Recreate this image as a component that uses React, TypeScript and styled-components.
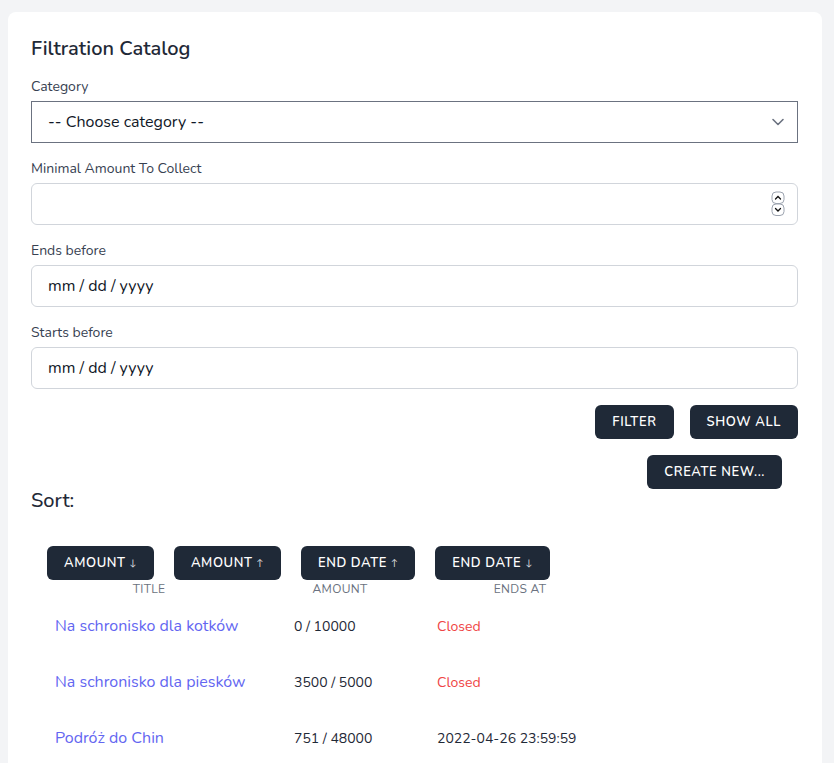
import React from "react";
import styled, { createGlobalStyle } from "styled-components";

const Global = createGlobalStyle`
  html, body { margin: 0; padding: 0; background: #f3f4f6; }
  body { font-family: "Nunito", Lato, "Noto Sans", sans-serif; color: #1f2937; }
  * { box-sizing: border-box; }
`;

const Page = styled.div`
  padding: 12px 12px 0 8px;
`;

const Card = styled.div`
  background: #fff;
  border-radius: 8px;
  padding: 23px 24px 24px 23px;
  min-height: 760px;
`;

const Title = styled.h2`
  margin: 0;
  font-size: 20px;
  line-height: 28px;
  font-weight: 600;
  color: #1f2937;
`;

const FieldGroup = styled.div<{ $top: number }>`
  margin-top: ${(p) => p.$top}px;
  display: flex;
  flex-direction: column;
  gap: 4px;
`;

const Label = styled.label`
  font-size: 14px;
  line-height: 20px;
  color: #374151;
`;

const Box = styled.div<{ $square?: boolean }>`
  height: 42px;
  display: flex;
  align-items: center;
  justify-content: space-between;
  padding: 0 12px 0 16px;
  border: 1px solid ${(p) => (p.$square ? "#6b7280" : "#d1d5db")};
  border-radius: ${(p) => (p.$square ? "0" : "6px")};
  background: #fff;
`;

const BoxText = styled.span`
  font-size: 16px;
  line-height: 24px;
  color: #111827;
`;

const BareInput = styled.input`
  flex: 1;
  border: none;
  outline: none;
  font: inherit;
  font-size: 16px;
  background: transparent;
  padding: 0;
  &::placeholder { color: #111827; }
`;

const ButtonRow = styled.div`
  margin-top: 16px;
  display: flex;
  justify-content: flex-end;
  gap: 16px;
`;

const Button = styled.button`
  height: 34px;
  padding: 0 17px;
  border: none;
  border-radius: 6px;
  background: #1f2937;
  color: #fff;
  font-family: inherit;
  font-size: 13px;
  font-weight: 600;
  letter-spacing: 0.6px;
  text-transform: uppercase;
  white-space: nowrap;
  cursor: pointer;
`;

const Arrow = styled.span`
  display: inline-block;
  font-size: 9px;
  font-weight: 400;
  margin-left: 4px;
  vertical-align: 1px;
  opacity: 0.85;
`;

const HeadRow = styled.div`
  margin-top: 16px;
  display: flex;
  justify-content: space-between;
  align-items: flex-start;
  padding-right: 16px;
`;

const SortTitle = styled.h2`
  margin: 32px 0 0;
  font-size: 20px;
  line-height: 28px;
  font-weight: 500;
  color: #1f2937;
`;

const SortSection = styled.div`
  padding-left: 16px;
  margin-top: 31px;
`;

const SortButtons = styled.div`
  display: flex;
  gap: 20px;
`;

const Grid = styled.div`
  display: grid;
  grid-template-columns: 204px 108px 182px;
  column-gap: 35px;
`;

const HeadCell = styled.div`
  height: 18px;
  font-size: 12px;
  line-height: 18px;
  text-align: center;
  text-transform: uppercase;
  color: #6b7280;
  letter-spacing: 0.3px;
`;

const Cell = styled.div<{ $color?: string; $size?: number }>`
  height: 56px;
  display: flex;
  align-items: center;
  padding-left: 8px;
  white-space: nowrap;
  font-size: ${(p) => p.$size ?? 14}px;
  color: ${(p) => p.$color ?? "#1f2937"};
`;

const Chevron = () => (
  <svg width="14" height="14" viewBox="0 0 14 14" fill="none">
    <path d="M2 4.5l5 5 5-5" stroke="#6b7280" strokeWidth="1.6" strokeLinecap="round" strokeLinejoin="round" />
  </svg>
);

const Spinner = () => (
  <svg width="14" height="26" viewBox="0 0 14 26" fill="none">
    <rect x="1" y="1" width="12" height="11.5" rx="4" stroke="#9ca3af" strokeWidth="1" />
    <rect x="1" y="13" width="12" height="11.5" rx="4" stroke="#9ca3af" strokeWidth="1" />
    <path d="M4.5 8l2.5-2.5L9.5 8" stroke="#111" strokeWidth="1.3" strokeLinecap="round" />
    <path d="M4.5 17.5L7 20l2.5-2.5" stroke="#111" strokeWidth="1.3" strokeLinecap="round" />
  </svg>
);

const rows = [
  { title: "Na schronisko dla kotków", amount: "0 / 10000", ends: "Closed", closed: true },
  { title: "Na schronisko dla piesków", amount: "3500 / 5000", ends: "Closed", closed: true },
  { title: "Podróż do Chin", amount: "751 / 48000", ends: "2022-04-26 23:59:59", closed: false },
];

const sorts = [
  { label: "Amount", arrow: "↓" },
  { label: "Amount", arrow: "↑" },
  { label: "End date", arrow: "↑" },
  { label: "End date", arrow: "↓" },
];

export default function App() {
  return (
    <Page>
      <Global />
      <Card>
        <Title>Filtration Catalog</Title>

        <FieldGroup $top={14}>
          <Label>Category</Label>
          <Box $square>
            <BoxText>-- Choose category --</BoxText>
            <Chevron />
          </Box>
        </FieldGroup>

        <FieldGroup $top={16}>
          <Label>Minimal Amount To Collect</Label>
          <Box>
            <BareInput />
            <Spinner />
          </Box>
        </FieldGroup>

        <FieldGroup $top={16}>
          <Label>Ends before</Label>
          <Box>
            <BareInput placeholder="mm / dd / yyyy" />
          </Box>
        </FieldGroup>

        <FieldGroup $top={16}>
          <Label>Starts before</Label>
          <Box>
            <BareInput placeholder="mm / dd / yyyy" />
          </Box>
        </FieldGroup>

        <ButtonRow>
          <Button>Filter</Button>
          <Button>Show all</Button>
        </ButtonRow>

        <HeadRow>
          <SortTitle>Sort:</SortTitle>
          <Button>Create new...</Button>
        </HeadRow>

        <SortSection>
          <SortButtons>
            {sorts.map((s, i) => (
              <Button key={i}>
                {s.label}
                <Arrow>{s.arrow}</Arrow>
              </Button>
            ))}
          </SortButtons>
          <Grid>
            <HeadCell>Title</HeadCell>
            <HeadCell>Amount</HeadCell>
            <HeadCell>Ends at</HeadCell>
            {rows.map((r) => (
              <React.Fragment key={r.title}>
                <Cell $color="#6366f1" $size={16}>{r.title}</Cell>
                <Cell>{r.amount}</Cell>
                <Cell $color={r.closed ? "#ef4444" : "#1f2937"}>{r.ends}</Cell>
              </React.Fragment>
            ))}
          </Grid>
        </SortSection>
      </Card>
    </Page>
  );
}
